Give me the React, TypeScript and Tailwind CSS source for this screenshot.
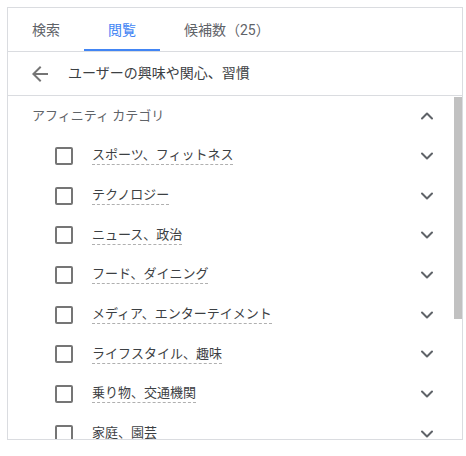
import { ChevronDown, ChevronUp } from "lucide-react";

const categories = [
  "スポーツ、フィットネス",
  "テクノロジー",
  "ニュース、政治",
  "フード、ダイニング",
  "メディア、エンターテイメント",
  "ライフスタイル、趣味",
  "乗り物、交通機関",
  "家庭、園芸",
];

const tabs = [
  { label: "検索", active: false },
  { label: "閲覧", active: true },
  { label: "候補数（25）", active: false },
];

function BackArrow() {
  return (
    <svg width="24" height="24" viewBox="0 0 24 24" className="shrink-0">
      <path
        d="M20 11H7.83l5.59-5.59L12 4l-8 8 8 8 1.41-1.41L7.83 13H20v-2z"
        fill="#757575"
      />
    </svg>
  );
}

export default function App() {
  return (
    <div
      className="min-h-screen bg-white pl-[7px] pt-[7px]"
      style={{ fontFamily: '"Roboto", "Noto Sans CJK JP", sans-serif' }}
    >
      <div className="flex h-[433px] w-[456px] flex-col overflow-hidden border border-[#dadce0]">
        <div className="flex h-[44px] shrink-0 border-b border-[#dadce0]">
          {tabs.map((t) => (
            <div
              key={t.label}
              className={
                t.active
                  ? "flex h-full items-center border-b-2 border-[#4285f4] px-6 pt-[3px] text-[14px] text-[#4285f4]"
                  : "flex h-full items-center border-b-2 border-transparent px-6 pt-[3px] text-[14px] text-[#5f6368]"
              }
            >
              {t.label}
            </div>
          ))}
        </div>

        <div className="flex h-[44px] shrink-0 items-center gap-4 border-b border-[#dadce0] pl-5">
          <BackArrow />
          <span className="text-[14px] text-[#3c4043]">ユーザーの興味や関心、習慣</span>
        </div>

        <div className="relative flex-1 overflow-hidden">
          <div className="flex h-10 items-center justify-between pl-6 pr-[25px]">
            <span className="text-[13px] text-[#5f6368]">アフィニティ カテゴリ</span>
            <ChevronUp size={20} strokeWidth={2.4} color="#5f6368" />
          </div>
          {categories.map((c) => (
            <div key={c} className="flex h-[39.7px] items-center pl-[47px] pr-[25px]">
              <div className="h-[18px] w-[18px] shrink-0 rounded-[2px] border-2 border-[#757575]" />
              <span className="ml-[19px] border-b border-dashed border-[#b0b0b0] text-[13px] leading-[18px] text-[#3c4043]">
                {c}
              </span>
              <ChevronDown size={20} strokeWidth={2.4} color="#5f6368" className="ml-auto shrink-0" />
            </div>
          ))}
          <div className="absolute right-0 top-[1px] h-[222px] w-[8px] bg-[#c1c1c1]" />
        </div>
      </div>
    </div>
  );
}
